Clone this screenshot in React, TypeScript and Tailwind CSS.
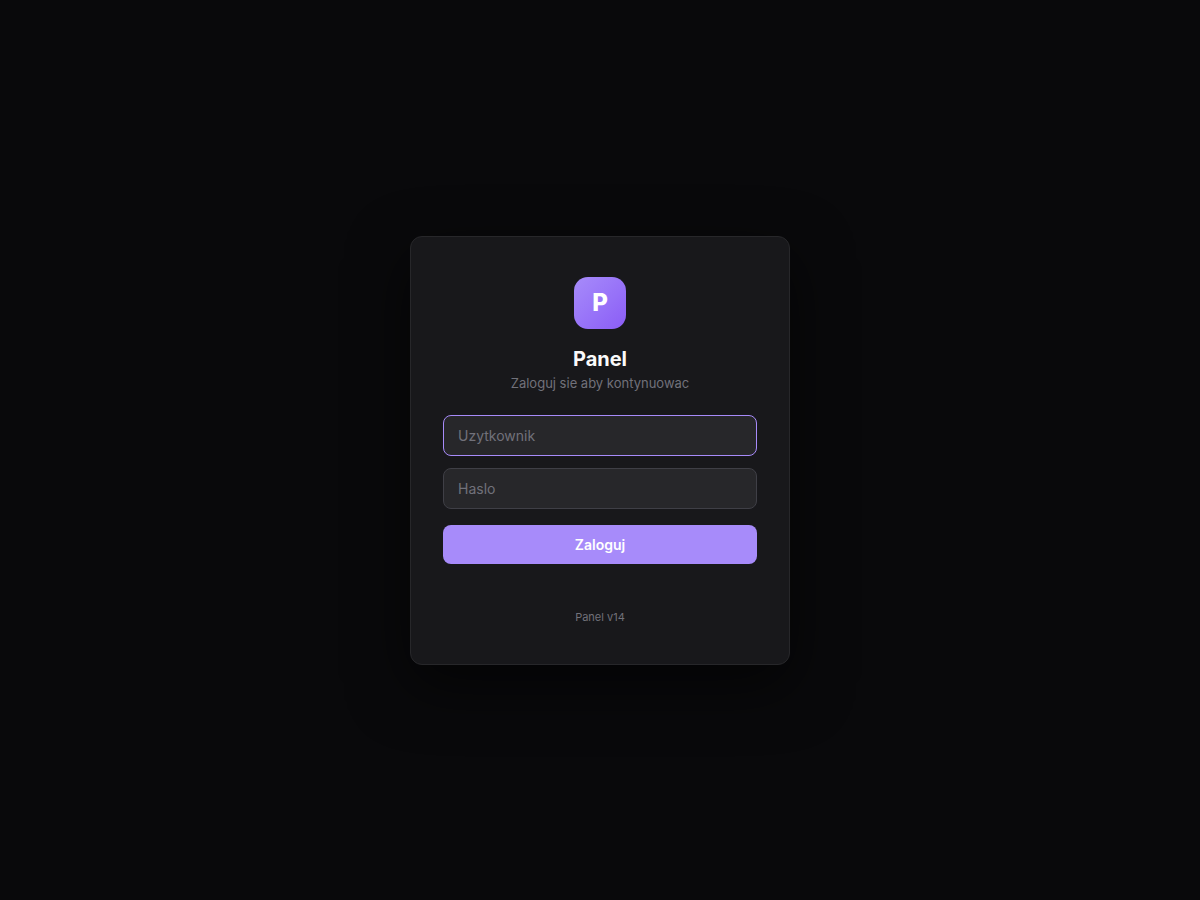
export default function App() {
  return (
    <main className="flex min-h-screen items-center justify-center bg-[#09090b] p-4 font-['Inter',sans-serif]">
      <section className="w-full max-w-[380px] rounded-xl border border-[#27272a] bg-[#18181b] px-8 py-10 text-center shadow-[0_20px_60px_rgba(0,0,0,0.6)]">
        <div className="mx-auto flex size-[52px] items-center justify-center rounded-[14px] bg-linear-135 from-[#a78bfa] to-[#8b5cf6] text-2xl font-extrabold text-white">
          P
        </div>
        <h1 className="mt-4 text-xl leading-7 font-bold text-[#fafafa]">Panel</h1>
        <p className="text-[13px] leading-5 text-[#71717a]">Zaloguj sie aby kontynuowac</p>
        <form className="mt-[22px] flex flex-col" onSubmit={(e) => e.preventDefault()}>
          <input
            type="text"
            aria-label="Uzytkownik"
            placeholder="Uzytkownik"
            autoComplete="username"
            className="h-[41px] w-full rounded-lg border border-[#a78bfa] bg-[#27272a] px-3.5 text-sm text-[#fafafa] outline-none placeholder:text-[#71717a]"
          />
          <input
            type="password"
            aria-label="Haslo"
            placeholder="Haslo"
            autoComplete="current-password"
            className="mt-3 h-[41px] w-full rounded-lg border border-[#3f3f46] bg-[#27272a] px-3.5 text-sm text-[#fafafa] outline-none placeholder:text-[#71717a] focus:border-[#a78bfa]"
          />
          <button
            type="submit"
            className="mt-4 w-full cursor-pointer rounded-lg bg-[#a78bfa] py-[11px] text-sm leading-[17px] font-semibold text-white"
          >
            Zaloguj
          </button>
        </form>
        <footer className="mt-[46px] text-[11px] leading-[14px] text-[#71717a]">Panel v14</footer>
      </section>
    </main>
  );
}
